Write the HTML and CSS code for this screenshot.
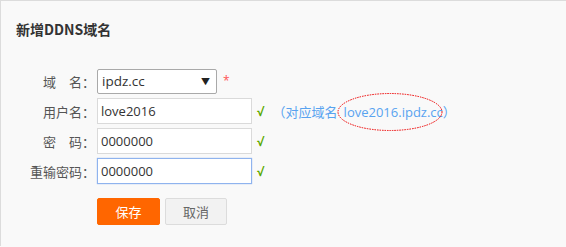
FILE: index.html
```html
<!DOCTYPE html>
<html lang="zh">
<head>
<meta charset="utf-8">
<link rel="stylesheet" href="styles.css">
</head>
<body>
<div class="panel">
  <h2 class="title">新增DDNS域名</h2>
  <div class="form">
    <div class="row">
      <label class="lbl">域　名：</label>
      <div class="select"><span>ipdz.cc</span><span class="arrow">▼</span></div>
      <span class="req">*</span>
    </div>
    <div class="row">
      <label class="lbl">用户名：</label>
      <div class="input">love2016</div>
      <span class="ok">√</span>
      <span class="hint">（对应域名<span class="domain">love2016.ipdz.cc<svg class="ring" width="110" height="42" viewBox="0 0 110 42"><ellipse cx="55" cy="21" rx="52" ry="18.5" fill="none" stroke="#e00" stroke-width="1" stroke-dasharray="1.5 1"/></svg></span>）</span>
    </div>
    <div class="row">
      <label class="lbl">密　码：</label>
      <div class="input">0000000</div>
      <span class="ok">√</span>
    </div>
    <div class="row">
      <label class="lbl">重输密码：</label>
      <div class="input focus">0000000</div>
      <span class="ok">√</span>
    </div>
    <div class="actions">
      <button class="btn primary">保存</button>
      <button class="btn">取消</button>
    </div>
  </div>
</div>
</body>
</html>
```

FILE: styles.css
```css
html, body {
  margin: 0;
  padding: 0;
  background: #f9f9f9;
}
body {
  font-family: "Open Sans", "Noto Sans CJK SC", sans-serif;
  font-size: 13px;
  color: #555;
  width: 566px;
  height: 247px;
  overflow: hidden;
}
.panel {
  border-top: 1px solid #dcdcdc;
  border-left: 1px solid #dcdcdc;
  height: 246px;
  box-sizing: border-box;
}
.title {
  margin: 0;
  padding: 18px 0 0 15px;
  font-size: 14px;
  font-weight: bold;
  color: #333;
  line-height: 20px;
  font-family: "Noto Sans CJK SC", sans-serif;
}
.form {
  margin-top: 29px;
  display: flex;
  flex-direction: column;
  gap: 4px;
}
.row {
  display: flex;
  align-items: center;
  height: 26px;
  position: relative;
}
.lbl {
  width: 94px;
  text-align: right;
  flex: none;
  color: #555;
  font-family: "Noto Sans CJK SC", sans-serif;
  margin-right: 2px;
}
.select {
  width: 120px;
  height: 25px;
  box-sizing: border-box;
  border: 1px solid #a9a9a9;
  border-radius: 2px;
  background: #fff;
  display: flex;
  align-items: center;
  justify-content: space-between;
  padding: 0 6px 0 4px;
  color: #333;
  font-size: 13.5px;
}
.arrow {
  font-size: 9px;
  color: #222;
}
.req {
  color: #f55;
  margin-left: 6px;
  font-size: 12px;
  align-self: flex-start;
  margin-top: 4px;
}
.input {
  width: 155px;
  height: 26px;
  box-sizing: border-box;
  border: 1px solid #dadada;
  background: #fff;
  display: flex;
  align-items: center;
  padding-left: 3px;
  color: #333;
  font-size: 13px;
}
.input.focus {
  border-color: #8fb3ee;
  box-shadow: 0 0 1px #8fb3ee;
}
.ok {
  color: #5aa800;
  margin-left: 5px;
  font-weight: bold;
  font-size: 12px;
}
.hint {
  color: #58a3f0;
  margin-left: 9px;
  font-family: "Noto Sans CJK SC", sans-serif;
}
.domain {
  position: relative;
  margin-left: 6px;
  font-family: "Open Sans", "Noto Sans CJK SC", sans-serif;
  font-size: 13px;
}
.ring {
  position: absolute;
  left: -9px;
  top: -12px;
}
.actions {
  display: flex;
  gap: 5px;
  margin-top: 10px;
  padding-left: 96px;
}
.btn {
  height: 27px;
  width: 62px;
  border: 1px solid #dcdcdc;
  background: #f2f2f2;
  color: #666;
  font-family: "Noto Sans CJK SC", sans-serif;
  font-size: 13px;
  border-radius: 2px;
  padding: 0;
}
.btn.primary {
  width: 63px;
  background: #ff6600;
  border-color: #ff6600;
  color: #fff;
}
```
